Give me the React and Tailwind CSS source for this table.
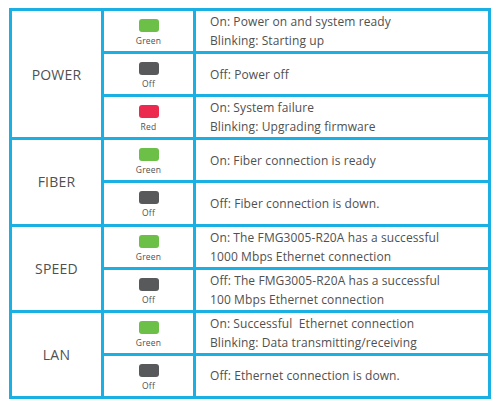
const groups = [
  {
    name: "POWER",
    rows: [
      { led: "green", label: "Green", text: ["On: Power on and system ready", "Blinking: Starting up"] },
      { led: "off", label: "Off", text: ["Off: Power off"] },
      { led: "red", label: "Red", text: ["On: System failure", "Blinking: Upgrading firmware"] },
    ],
  },
  {
    name: "FIBER",
    rows: [
      { led: "green", label: "Green", text: ["On: Fiber connection is ready"] },
      { led: "off", label: "Off", text: ["Off: Fiber connection is down."] },
    ],
  },
  {
    name: "SPEED",
    rows: [
      { led: "green", label: "Green", text: ["On: The FMG3005-R20A has a successful", "1000 Mbps Ethernet connection"] },
      { led: "off", label: "Off", text: ["Off: The FMG3005-R20A has a successful", "100 Mbps Ethernet connection"] },
    ],
  },
  {
    name: "LAN",
    rows: [
      { led: "green", label: "Green", text: ["On: Successful  Ethernet connection", "Blinking: Data transmitting/receiving"] },
      { led: "off", label: "Off", text: ["Off: Ethernet connection is down."] },
    ],
  },
];

const ledClass = {
  green: "bg-[#6cbf47]",
  off: "bg-[#58595b]",
  red: "bg-[#ec2a4f]",
};

const spanClass = {
  1: "row-span-1",
  2: "row-span-2",
  3: "row-span-3",
};

export default function App() {
  return (
    <div className="w-[504px] h-[405px] bg-white pt-[8px] pl-[9px] font-['Open_Sans',sans-serif] text-[#505050]">
      <div className="w-[482px] h-[391px] bg-[#1ab0e4] p-[3px] grid grid-cols-[89px_89px_1fr] grid-rows-[repeat(9,1fr)] gap-[3px]">
        {groups.map((g) => (
          <div key={g.name} className="contents">
            <div className={`${spanClass[g.rows.length]} bg-white flex items-center justify-center text-[14px] tracking-[0.2px]`}>
              {g.name}
            </div>
            {g.rows.map((r, i) => (
              <div key={i} className="contents">
                <div className="col-start-2 bg-white flex flex-col items-center pt-[8px]">
                  <div className={`w-[20px] h-[13px] rounded-[3px] ${ledClass[r.led]}`} />
                  <div className="text-[8.5px] leading-[10px] mt-[4px] tracking-[0.2px]">{r.label}</div>
                </div>
                <div className="col-start-3 bg-white flex flex-col justify-center pl-[14px] text-[12px] leading-[19px] tracking-[0.1px] whitespace-pre">
                  {r.text.map((t, j) => (
                    <div key={j}>{t}</div>
                  ))}
                </div>
              </div>
            ))}
          </div>
        ))}
      </div>
    </div>
  );
}
